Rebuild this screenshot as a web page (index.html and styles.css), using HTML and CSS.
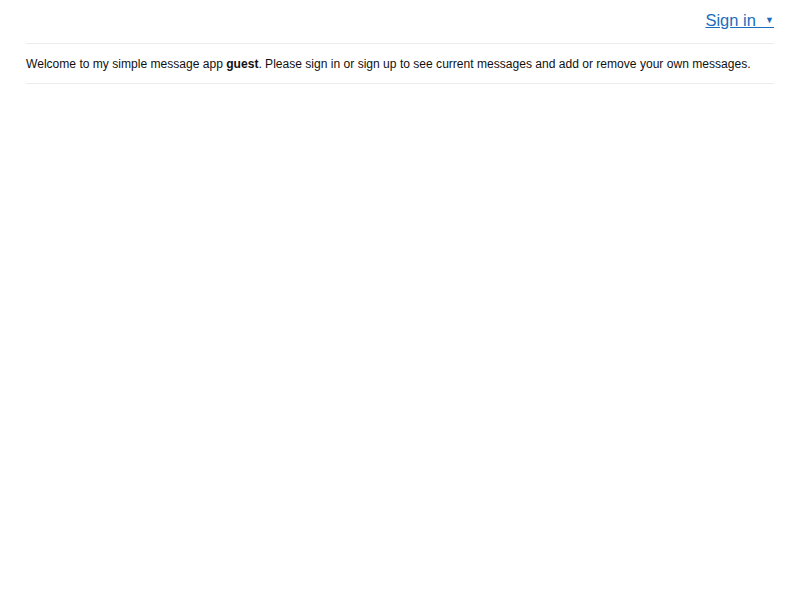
FILE: index.html
```html
<!DOCTYPE html>
<html>
<head>
<meta charset="utf-8">
<link rel="stylesheet" href="styles.css">
</head>
<body>
<div class="page">
  <header class="topbar">
    <a class="signin" href="#">Sign in&nbsp; <span class="caret">▼</span></a>
  </header>
  <section class="welcome">
    <p>Welcome to my simple message app <strong>guest</strong>. Please sign in or sign up to see current messages and add or remove your own messages.</p>
  </section>
</div>
</body>
</html>
```
FILE: styles.css
```css
html, body {
  margin: 0;
  padding: 0;
  background: #fff;
  font-family: "Liberation Sans", Arial, sans-serif;
  color: #111;
}
.page {
  margin: 0 26px;
}
.topbar {
  display: flex;
  justify-content: flex-end;
  padding: 11px 0 14px;
  border-bottom: 1px solid #ececec;
}
.signin {
  font-size: 16.5px;
  line-height: 18px;
  color: #1d6cbc;
  text-decoration: underline;
}
.caret {
  font-size: 9px;
  vertical-align: 3px;
}
.welcome {
  border-bottom: 1px solid #ececec;
}
.welcome p {
  margin: 0;
  padding: 13px 0 11px;
  font-size: 12.07px;
  line-height: 15px;
}
.welcome strong {
  font-weight: bold;
}
```
